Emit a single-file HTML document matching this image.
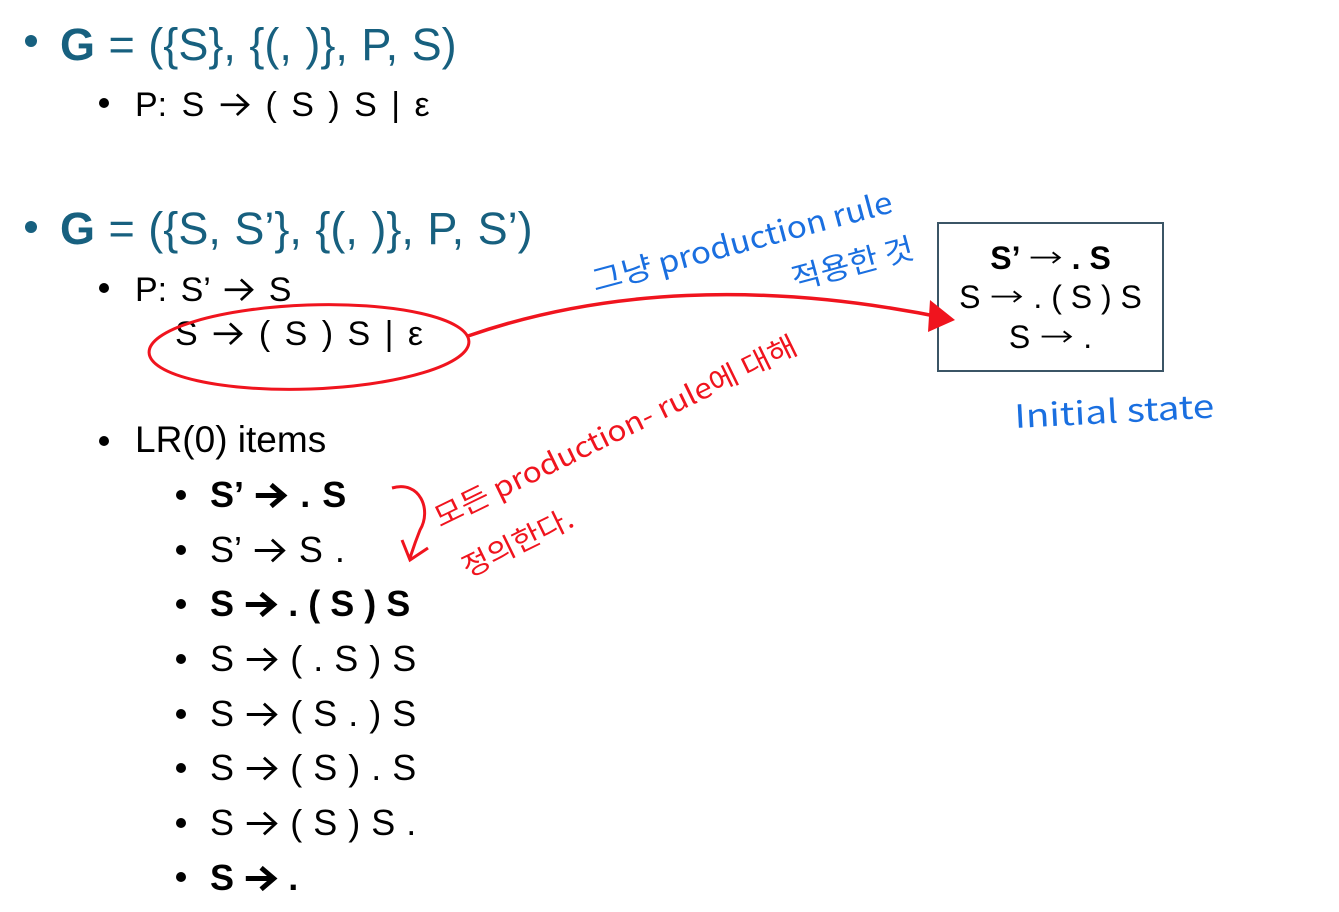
<!DOCTYPE html>
<html><head><meta charset="utf-8"><style>
html,body{margin:0;padding:0;background:#fff;}
body{width:1339px;height:912px;position:relative;overflow:hidden;font-family:"Liberation Sans","Noto Sans CJK KR",sans-serif;}
.t{position:absolute;line-height:1;white-space:pre;color:#000;}
.teal{color:#17607f;}
.b{font-weight:bold;}
.dot{position:absolute;border-radius:50%;}
.ar{display:inline-block;width:0.95em;height:0.75em;vertical-align:-0.05em;}
.ta{display:inline-block;width:1.1em;height:0.6em;vertical-align:0.05em;}
</style></head><body>
<svg width="0" height="0" style="position:absolute"><defs>
<symbol id="a" viewBox="0 0 38 30"><path d="M2 15 H34 M21 3 L34 15 L21 27" fill="none" stroke="#000" stroke-width="3.2" stroke-linejoin="miter"/></symbol>
<symbol id="ab" viewBox="0 0 38 30"><path d="M2 15 H33 M19 3 L33 15 L19 27" fill="none" stroke="#000" stroke-width="5.5" stroke-linejoin="miter"/></symbol>
<symbol id="th" viewBox="0 0 40 20"><path d="M3 10 H35 M28 4 L36 10 L28 16" fill="none" stroke="#000" stroke-width="2.2"/></symbol>
</defs></svg>
<!-- level 1 -->
<div class="dot" style="left:25px;top:35px;width:12px;height:12px;background:#17607f"></div>
<div class="t teal" style="left:60px;top:22px;font-size:45px;word-spacing:1px;"><span class="b">G</span> = ({S}, {(, )}, P, S)</div>
<div class="dot" style="left:99px;top:98px;width:10px;height:10px;background:#000"></div>
<div class="t" style="left:135px;top:88px;font-size:34px;word-spacing:5px;">P: S <svg class="ar"><use href="#a"/></svg> ( S ) S | ε</div>

<div class="dot" style="left:25px;top:221px;width:12px;height:12px;background:#17607f"></div>
<div class="t teal" style="left:60px;top:206px;font-size:45px;word-spacing:1px;"><span class="b">G</span> = ({S, S’}, {(, )}, P, S’)</div>
<div class="dot" style="left:99px;top:283px;width:10px;height:10px;background:#000"></div>
<div class="t" style="left:135px;top:273px;font-size:34px;word-spacing:4px;">P: S’ <svg class="ar"><use href="#a"/></svg> S</div>
<div class="t" style="left:175px;top:317px;font-size:34px;word-spacing:5px;">S <svg class="ar"><use href="#a"/></svg> ( S ) S | ε</div>

<div class="dot" style="left:99px;top:436px;width:10px;height:10px;background:#000"></div>
<div class="t" style="left:135px;top:421px;font-size:37px;">LR(0) items</div>

<div class="dot" style="left:176px;top:490px;width:10px;height:10px;background:#000"></div>
<div class="t b" style="left:210px;top:477px;font-size:36px;word-spacing:2px;">S’ <svg class="ar"><use href="#ab"/></svg> . S</div>
<div class="dot" style="left:176px;top:545px;width:10px;height:10px;background:#000"></div>
<div class="t" style="left:210px;top:532px;font-size:36px;word-spacing:2px;">S’ <svg class="ar"><use href="#a"/></svg> S .</div>
<div class="dot" style="left:176px;top:599px;width:10px;height:10px;background:#000"></div>
<div class="t b" style="left:210px;top:586px;font-size:36px;">S <svg class="ar"><use href="#ab"/></svg> . ( S ) S</div>
<div class="dot" style="left:176px;top:654px;width:10px;height:10px;background:#000"></div>
<div class="t" style="left:210px;top:641px;font-size:36px;word-spacing:1px;">S <svg class="ar"><use href="#a"/></svg> ( . S ) S</div>
<div class="dot" style="left:176px;top:709px;width:10px;height:10px;background:#000"></div>
<div class="t" style="left:210px;top:696px;font-size:36px;word-spacing:1px;">S <svg class="ar"><use href="#a"/></svg> ( S . ) S</div>
<div class="dot" style="left:176px;top:763px;width:10px;height:10px;background:#000"></div>
<div class="t" style="left:210px;top:750px;font-size:36px;word-spacing:1px;">S <svg class="ar"><use href="#a"/></svg> ( S ) . S</div>
<div class="dot" style="left:176px;top:818px;width:10px;height:10px;background:#000"></div>
<div class="t" style="left:210px;top:805px;font-size:36px;word-spacing:1px;">S <svg class="ar"><use href="#a"/></svg> ( S ) S .</div>
<div class="dot" style="left:176px;top:872px;width:10px;height:10px;background:#000"></div>
<div class="t b" style="left:210px;top:860px;font-size:36px;">S <svg class="ar"><use href="#ab"/></svg> .</div>

<!-- box -->
<div style="position:absolute;left:937px;top:222px;width:223px;height:146px;border:2px solid #3b5566;"></div>
<div class="t b" style="left:937px;width:227px;text-align:center;top:242px;font-size:32px;">S’ <svg class="ta"><use href="#th"/></svg> . S</div>
<div class="t" style="left:937px;width:227px;text-align:center;top:281px;font-size:32px;">S <svg class="ta"><use href="#th"/></svg> . ( S ) S</div>
<div class="t" style="left:937px;width:227px;text-align:center;top:321px;font-size:32px;">S <svg class="ta"><use href="#th"/></svg> .</div>

<svg width="1339" height="912" style="position:absolute;left:0;top:0" xmlns="http://www.w3.org/2000/svg">
<ellipse cx="309" cy="347" rx="160" ry="42" fill="none" stroke="#f0141e" stroke-width="3" transform="rotate(-2 309 347)"/>
<path d="M468 336 C600 290 760 280 945 318" fill="none" stroke="#f0141e" stroke-width="3.5"/>
<path d="M930 300 L955 320 L928 332 Z" fill="#f0141e"/>
<path d="M392 488 C420 480 432 510 420 530 C414 545 412 552 410 558 M402 540 L410 560 L428 548" fill="none" stroke="#f0141e" stroke-width="3"/>
<g font-family="'Noto Sans CJK KR','Liberation Sans',sans-serif" fill="#1a6fe0" font-size="30">
<text x="595" y="292" transform="rotate(-15 595 292)" textLength="310" lengthAdjust="spacingAndGlyphs">그냥 production rule</text>
<text x="795" y="290" transform="rotate(-15 795 290)" font-size="30" textLength="125" lengthAdjust="spacingAndGlyphs">적용한 것</text>
<text x="1015" y="428" transform="rotate(-3 1015 428)" font-size="32" textLength="200" lengthAdjust="spacingAndGlyphs">Initial state</text>
</g>
<g font-family="'Noto Sans CJK KR','Liberation Sans',sans-serif" fill="#f0141e" font-size="28">
<text x="440" y="528" transform="rotate(-26 440 528)" textLength="400" lengthAdjust="spacingAndGlyphs">모든 production- rule에 대해</text>
<text x="468" y="578" transform="rotate(-26 468 578)" textLength="120" lengthAdjust="spacingAndGlyphs">정의한다.</text>
</g>
</svg>
</body></html>
